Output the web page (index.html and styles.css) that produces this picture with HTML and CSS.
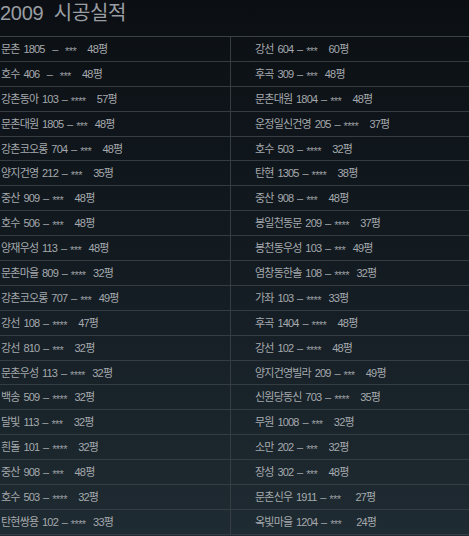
FILE: index.html
```html
<!DOCTYPE html>
<html lang="ko">
<head>
<meta charset="utf-8">
<title>2009 시공실적</title>
<link rel="stylesheet" href="styles.css">
</head>
<body>
<div class="page">
  <h1 class="title">2009&nbsp; 시공실적</h1>
  <div class="list">
    <div class="cell l">문촌 1805  –  <span class="st">***</span>   48평</div>
    <div class="cell r">강선 604 – <span class="st">***</span>   60평</div>
    <div class="cell l">호수 406  –  <span class="st">***</span>   48평</div>
    <div class="cell r">후곡 309 – <span class="st">***</span>  48평</div>
    <div class="cell l">강촌동아 103 – <span class="st">****</span>   57평</div>
    <div class="cell r">문촌대원 1804 – <span class="st">***</span>   48평</div>
    <div class="cell l">문촌대원 1805 – <span class="st">***</span>  48평</div>
    <div class="cell r">운정일신건영 205 – <span class="st">****</span>   37평</div>
    <div class="cell l">강촌코오롱 704 – <span class="st">***</span>   48평</div>
    <div class="cell r">호수 503 – <span class="st">****</span>   32평</div>
    <div class="cell l">양지건영 212 – <span class="st">***</span>   35평</div>
    <div class="cell r">탄현 1305 – <span class="st">****</span>   38평</div>
    <div class="cell l">중산 909 – <span class="st">***</span>   48평</div>
    <div class="cell r">중산 908 – <span class="st">***</span>   48평</div>
    <div class="cell l">호수 506 – <span class="st">***</span>   48평</div>
    <div class="cell r">봉일천동문 209 – <span class="st">****</span>   37평</div>
    <div class="cell l">양재우성 113 – <span class="st">***</span>  48평</div>
    <div class="cell r">봉천동우성 103 – <span class="st">***</span>  49평</div>
    <div class="cell l">문촌마을 809 – <span class="st">****</span>  32평</div>
    <div class="cell r">염창동한솔 108 – <span class="st">****</span>  32평</div>
    <div class="cell l">강촌코오롱 707 – <span class="st">***</span>  49평</div>
    <div class="cell r">가좌 103 – <span class="st">****</span>  33평</div>
    <div class="cell l">강선 108 – <span class="st">****</span>   47평</div>
    <div class="cell r">후곡 1404 – <span class="st">****</span>   48평</div>
    <div class="cell l">강선 810 – <span class="st">***</span>   32평</div>
    <div class="cell r">강선 102 – <span class="st">****</span>   48평</div>
    <div class="cell l">문촌우성 113 – <span class="st">****</span>  32평</div>
    <div class="cell r">양지건영빌라 209 – <span class="st">***</span>   49평</div>
    <div class="cell l">백송 509 – <span class="st">****</span>  32평</div>
    <div class="cell r">신원당동신 703 – <span class="st">****</span>   35평</div>
    <div class="cell l">달빛 113 – <span class="st">***</span>   32평</div>
    <div class="cell r">무원 1008 – <span class="st">***</span>   32평</div>
    <div class="cell l">흰돌 101 – <span class="st">****</span>   32평</div>
    <div class="cell r">소만 202 – <span class="st">***</span>   32평</div>
    <div class="cell l">중산 908 – <span class="st">***</span>   48평</div>
    <div class="cell r">장성 302 – <span class="st">***</span>   48평</div>
    <div class="cell l">호수 503 – <span class="st">****</span>   32평</div>
    <div class="cell r">문촌신우 1911 – <span class="st">***</span>    27평</div>
    <div class="cell l">탄현쌍용 102 – <span class="st">****</span>  33평</div>
    <div class="cell r">옥빛마을 1204 – <span class="st">***</span>    24평</div>
  </div>
</div>
</body>
</html>
```

FILE: styles.css
```css
html, body {
  margin: 0;
  padding: 0;
}
body {
  width: 469px;
  height: 536px;
  overflow: hidden;
  background: linear-gradient(to bottom, #0b0f13 0%, #121a20 45%, #1f2b32 100%);
  font-family: "Liberation Sans", "Noto Sans CJK KR", sans-serif;
  color: #a5a9ad;
}
.page {
  display: flex;
  flex-direction: column;
}
.title {
  margin: 0;
  height: 36px;
  font-size: 20px;
  font-weight: normal;
  line-height: 26px;
  letter-spacing: -0.3px;
  color: #9a9ea2;
}
.list {
  display: grid;
  grid-template-columns: 231px 238px;
  grid-auto-rows: 24.9px;
  border-top: 1px solid #3a4247;
}
.cell {
  border-bottom: 1px solid #353d43;
  font-size: 11px;
  letter-spacing: -0.8px;
  word-spacing: 1.5px;
  white-space: pre;
  display: flex;
  align-items: center;
  line-height: 1;
  padding-top: 1px;
}
.dash {
  letter-spacing: 0;
}
.l {
  border-right: 1px solid #353d43;
  padding-left: 1px;
}
.r {
  padding-left: 24px;
}
.st {
  font-size: 11px;
  letter-spacing: -0.6px;
  position: relative;
  top: 2px;
  color: #999da1;
}
```
